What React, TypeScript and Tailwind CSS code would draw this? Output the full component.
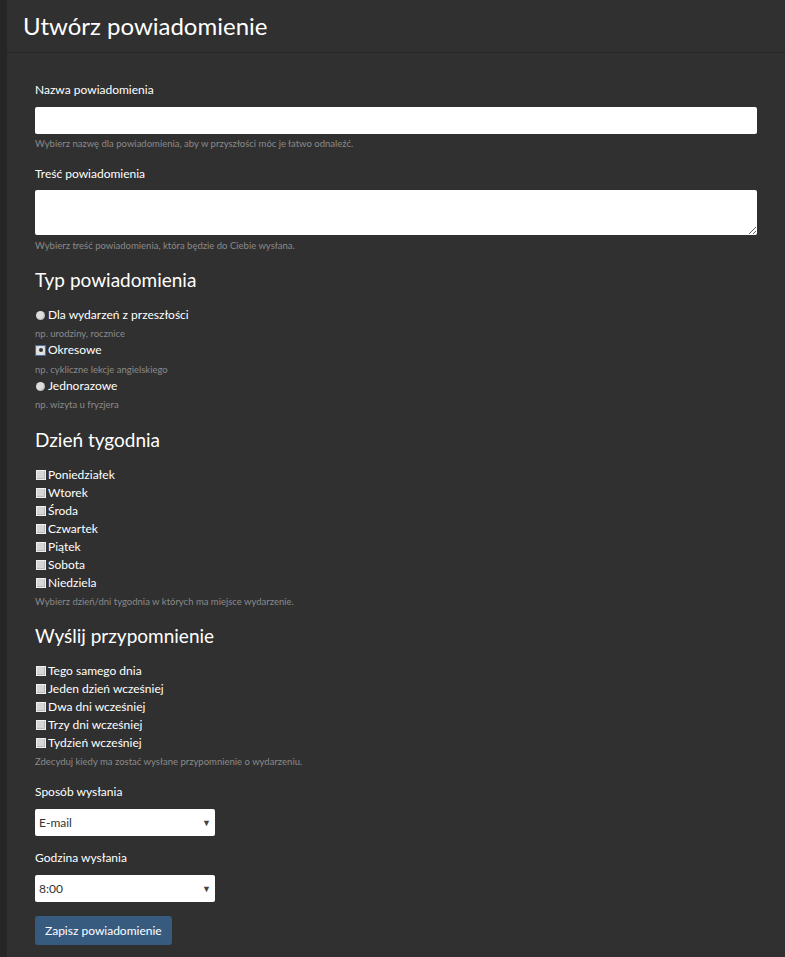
const font = { fontFamily: "Lato, 'Open Sans', sans-serif" };

const labelStyle = "block h-[18px] text-[12px] leading-[18px] text-white";
const helpStyle = "h-[14px] text-[9.5px] leading-[14px] text-[#8a8a8a]";
const headingStyle = "h-[24px] text-[19px] leading-[24px] text-white";
const inputStyle = "w-full rounded-[2px] bg-white";

const Radio = ({ checked }: { checked?: boolean }) =>
  checked ? (
    <span className="mr-[2px] flex h-[11px] w-[11px] items-center justify-center border border-[#4a6f9c] bg-[#c8d3e0]">
      <span className="flex h-[9px] w-[9px] items-center justify-center rounded-full bg-[#e2e2e2]">
        <span className="h-[4px] w-[4px] rounded-full bg-[#333]" />
      </span>
    </span>
  ) : (
    <span className="mr-[3px] ml-[1px] h-[9px] w-[9px] rounded-full bg-[#dcdcdc] shadow-[inset_-1px_-1px_1px_rgba(0,0,0,0.15)]" />
  );

const Checkbox = () => (
  <span className="mr-[2px] ml-[1px] h-[10px] w-[10px] border border-[#f0f0f0] bg-[#d6d6d6] shadow-[inset_-1px_-1px_0_#bbb]" />
);

const RadioRow = ({ text, checked }: { text: string; checked?: boolean }) => (
  <div className="flex h-[18px] items-center text-[12px] leading-[18px] text-white">
    <Radio checked={checked} />
    <span>{text}</span>
  </div>
);

const CheckRow = ({ text }: { text: string }) => (
  <div className="flex h-[18px] items-center text-[12px] leading-[18px] text-white">
    <Checkbox />
    <span>{text}</span>
  </div>
);

const FakeSelect = ({ value }: { value: string }) => (
  <div className="flex h-[27px] w-[180px] items-center justify-between rounded-[2px] bg-white pr-[4px] pl-[4px] text-[12px] text-[#333]">
    <span>{value}</span>
    <span className="text-[9px] text-[#444]">▼</span>
  </div>
);

const days = ["Poniedziałek", "Wtorek", "Środa", "Czwartek", "Piątek", "Sobota", "Niedziela"];
const reminders = ["Tego samego dnia", "Jeden dzień wcześniej", "Dwa dni wcześniej", "Trzy dni wcześniej", "Tydzień wcześniej"];

export default function App() {
  return (
    <div className="flex min-h-[957px] bg-[#303030]" style={font}>
      <div className="w-[7px] shrink-0 bg-[#262626]" />
      <div className="flex-1">
        <div className="flex h-[53px] items-center border-b border-[#282828] pl-[16px]">
          <h1 className="text-[24px] leading-[32px] text-white">Utwórz powiadomienie</h1>
        </div>
        <form className="flex flex-col pt-[28px] pr-[28px] pl-[28px]">
          <label className={labelStyle}>Nazwa powiadomienia</label>
          <input className={`${inputStyle} mt-[8px] h-[27px]`} />
          <p className={`${helpStyle} mt-[3px]`}>
            Wybierz nazwę dla powiadomienia, aby w przyszłości móc je łatwo odnaleźć.
          </p>

          <label className={`${labelStyle} mt-[14px]`}>Treść powiadomienia</label>
          <textarea className={`${inputStyle} mt-[7px] h-[45px] resize-y`} />
          <p className={`${helpStyle} mt-[4px]`}>
            Wybierz treść powiadomienia, która będzie do Ciebie wysłana.
          </p>

          <h2 className={`${headingStyle} mt-[15px]`}>Typ powiadomienia</h2>
          <div className="mt-[14px]">
            <RadioRow text="Dla wydarzeń z przeszłości" />
          </div>
          <p className={`${helpStyle} mt-[3px]`}>np. urodziny, rocznice</p>
          <RadioRow text="Okresowe" checked />
          <p className={`${helpStyle} mt-[4px]`}>np. cykliczne lekcje angielskiego</p>
          <RadioRow text="Jednorazowe" />
          <p className={`${helpStyle} mt-[3px]`}>np. wizyta u fryzjera</p>

          <h2 className={`${headingStyle} mt-[16px]`}>Dzień tygodnia</h2>
          <div className="mt-[14px] flex flex-col">
            {days.map((d) => (
              <CheckRow key={d} text={d} />
            ))}
          </div>
          <p className={`${helpStyle} mt-[3px]`}>
            Wybierz dzień/dni tygodnia w których ma miejsce wydarzenie.
          </p>

          <h2 className={`${headingStyle} mt-[15px]`}>Wyślij przypomnienie</h2>
          <div className="mt-[14px] flex flex-col">
            {reminders.map((r) => (
              <CheckRow key={r} text={r} />
            ))}
          </div>
          <p className={`${helpStyle} mt-[3px]`}>
            Zdecyduj kiedy ma zostać wysłane przypomnienie o wydarzeniu.
          </p>

          <label className={`${labelStyle} mt-[14px]`}>Sposób wysłania</label>
          <div className="mt-[8px]">
            <FakeSelect value="E-mail" />
          </div>

          <label className={`${labelStyle} mt-[13px]`}>Godzina wysłania</label>
          <div className="mt-[8px]">
            <FakeSelect value="8:00" />
          </div>

          <div className="mt-[14px]">
            <button
              type="button"
              className="h-[29px] rounded-[3px] bg-[#375a7f] px-[10px] text-[12px] text-white"
            >
              Zapisz powiadomienie
            </button>
          </div>
        </form>
      </div>
    </div>
  );
}
